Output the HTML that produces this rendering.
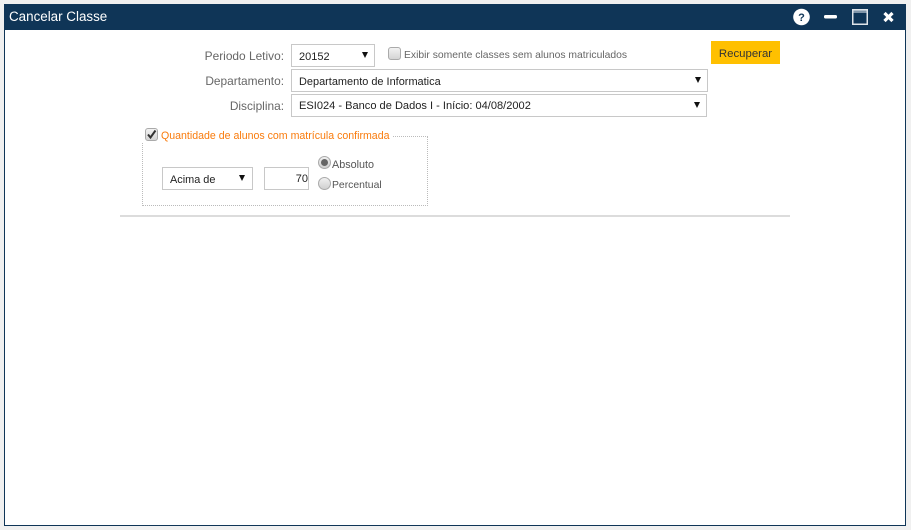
<!DOCTYPE html>
<html><head><meta charset="utf-8"><style>
html,body{margin:0;padding:0;width:911px;height:530px;overflow:hidden;background:#f0f0f0;font-family:"Liberation Sans",sans-serif}
#win{position:absolute;left:4px;top:4px;width:900px;height:521px;background:#fff;border:1px solid #0f3557;border-top:0}
#bar{position:absolute;left:4px;top:4px;width:902px;height:26px;background:#0f3557}
.t{position:absolute;white-space:nowrap;font-size:12px;line-height:14px}
.l{color:#666;text-align:right;width:120px;left:164px;font-size:11.900px}
.b{position:absolute;box-sizing:border-box;border:1px solid #c8c8c8;background:#fff}
.k{color:#222;font-size:11px}
.tri{position:absolute;width:0;height:0;border-left:3.5px solid transparent;border-right:3.5px solid transparent;border-top:6px solid #111}
.cb{position:absolute;box-sizing:border-box;width:13px;height:13px;border:1px solid #aaa;border-radius:3px;background:linear-gradient(#f2f2f2,#d4d4d4)}
.r{position:absolute;box-sizing:border-box;width:13px;height:13px;border:1px solid #aaa;border-radius:50%;background:linear-gradient(#f0f0f0,#d0d0d0)}
</style></head><body>
<div id="win"></div><div id="bar"></div>
<div class="t" style="left:9px;top:9px;color:#fff;font-size:13.4px;line-height:16px">Cancelar Classe</div>
<svg style="position:absolute;left:790px;top:5px" width="110" height="24" viewBox="0 0 110 24">
<circle cx="11.500" cy="12" r="8.300" fill="#fff"/>
<text x="11.500" y="16" font-family="Liberation Sans" font-size="11" font-weight="bold" fill="#0f3557" text-anchor="middle">?</text>
<rect x="34" y="10" width="13" height="3.500" rx="1.500" fill="#fff"/>
<rect x="62.750" y="4.750" width="14.500" height="14.500" fill="none" stroke="#dfe4e9" stroke-width="1.500"/>
<rect x="63.500" y="5.500" width="13" height="2.500" fill="#7f95a9"/>
<path d="M94.500 8l8 8M102.500 8l-8 8" stroke="#fff" stroke-width="3.200"/>
</svg>

<div class="t l" style="top:49px">Periodo Letivo:</div>
<div class="t l" style="top:74px">Departamento:</div>
<div class="t l" style="top:99px">Disciplina:</div>

<div class="b" style="left:291px;top:44px;width:84px;height:23px"></div>
<div class="t k" style="left:299px;top:50px">20152</div>
<div class="tri" style="left:362px;top:52px"></div>

<div class="cb" style="left:388px;top:47px"></div>
<div class="t" style="left:404px;top:49px;color:#666;font-size:10.350px">Exibir somente classes sem alunos matriculados</div>

<div class="t" style="left:711px;top:41px;width:69px;height:23px;background:#ffc000;color:#333;font-size:11.400px;line-height:26px;text-align:center">Recuperar</div>

<div class="b" style="left:291px;top:69px;width:417px;height:23px"></div>
<div class="t k" style="left:299px;top:75px;font-size:10.950px">Departamento de Informatica</div>
<div class="tri" style="left:695px;top:77px"></div>

<div class="b" style="left:291px;top:94px;width:416px;height:23px"></div>
<div class="t k" style="left:299px;top:99px;font-size:11.070px">ESI024 - Banco de Dados I - Início: 04/08/2002</div>
<div class="tri" style="left:694px;top:102px"></div>

<div style="position:absolute;box-sizing:border-box;left:142px;top:136px;width:286px;height:70px;border:1px dotted #bbb"></div>
<div style="position:absolute;left:142px;top:128px;width:251px;height:14px;background:#fff"></div>
<div class="cb" style="left:145px;top:128px"></div>
<svg style="position:absolute;left:145px;top:128px" width="13" height="13"><path d="M3 6.500l2.500 3L10.500 2.500" fill="none" stroke="#333" stroke-width="2"/></svg>
<div class="t" style="left:161px;top:129px;color:#f97b0c;font-size:10.600px">Quantidade de alunos com matrícula confirmada</div>

<div class="b" style="left:162px;top:167px;width:91px;height:23px"></div>
<div class="t k" style="left:170px;top:173px;font-size:10.900px">Acima de</div>
<div class="tri" style="left:239px;top:175px"></div>

<div class="b" style="left:264px;top:167px;width:45px;height:23px"></div>
<div class="t k" style="left:270px;top:172px;width:38px;text-align:right">70</div>

<div class="r" style="left:318px;top:156px"></div>
<div style="position:absolute;left:321px;top:159px;width:7px;height:7px;border-radius:50%;background:#666"></div>
<div class="t" style="left:332px;top:158px;color:#555;font-size:10.800px">Absoluto</div>
<div class="r" style="left:318px;top:177px"></div>
<div class="t" style="left:332px;top:179px;color:#555;font-size:10.400px">Percentual</div>

<div style="position:absolute;left:120px;top:215px;width:670px;height:2px;background:#dcdcdc"></div>
</body></html>
